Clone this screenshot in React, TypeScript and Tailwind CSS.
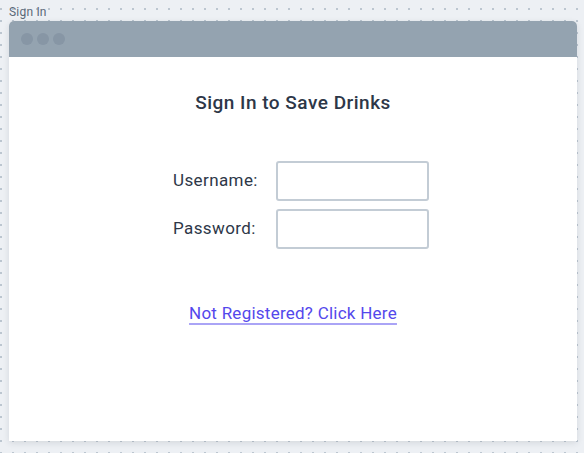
import React from "react";

const font = { fontFamily: '"Roboto", "Liberation Sans", sans-serif' };

const Field: React.FC<{ label: string; type?: string }> = ({ label, type = "text" }) => (
  <>
    <label className="text-[17px] tracking-[0.4px] text-[#2d3748] self-center">{label}</label>
    <input type={type} className="h-[40px] w-[153px] rounded-[3px] border-2 border-[#c3ccd5] bg-white outline-none" />
  </>
);

export default function App() {
  return (
    <div
      style={font}
      className="h-[453px] w-[584px] overflow-hidden bg-[#edf0f4] bg-[radial-gradient(circle,#bcc6d0_1px,transparent_1.3px)] bg-[size:12px_12px] bg-[position:7px_3px] pl-[9px]"
    >
      <div className="h-[21px] pt-[5px] text-[12px] leading-[14px] tracking-[0.2px] text-[#5b6878]">Sign In</div>
      <div className="w-[568px] h-[420px] rounded-t-[5px] bg-white shadow-[0_2px_6px_rgba(30,41,59,0.12)] flex flex-col">
        <div className="h-[36px] rounded-t-[5px] bg-[#94a3b0] flex items-center gap-1 pl-[12px]">
          <span className="w-3 h-3 rounded-full bg-[#8796a5]" />
          <span className="w-3 h-3 rounded-full bg-[#8796a5]" />
          <span className="w-3 h-3 rounded-full bg-[#8796a5]" />
        </div>
        <div className="flex flex-col items-center">
          <h1 className="mt-[34px] text-[19px] leading-6 tracking-[0.5px] font-medium text-[#2d3748]">Sign In to Save Drinks</h1>
          <div className="mt-[46px] pl-[16px]">
            <div className="grid grid-cols-[85px_153px] gap-x-[18px] gap-y-2">
              <Field label="Username:" />
              <Field label="Password:" type="password" />
            </div>
          </div>
          <a
            href="#"
            className="mt-[52px] text-[17px] leading-6 tracking-[0.25px] text-[#5448ec] underline decoration-[#aaa4f6] decoration-2 underline-offset-[4px]"
          >
            Not Registered? Click Here
          </a>
        </div>
      </div>
    </div>
  );
}
